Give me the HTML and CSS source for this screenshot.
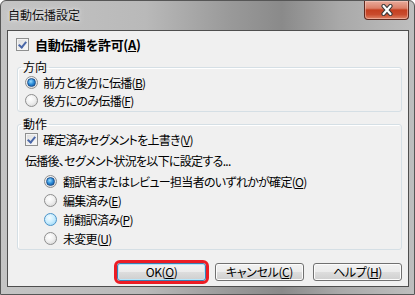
FILE: index.html
```html
<!DOCTYPE html>
<html>
<head>
	<title>自動伝播設定</title>
	<link rel="stylesheet" href="styles.css">
</head>
<body>
	<div class="window">
		<div class="titlebar">
			<span class="title">自動伝播設定</span>
			<span class="close">
				<svg width="14" height="12" viewBox="0 0 14 12">
					<path d="M3.5 2 L10.5 10 M10.5 2 L3.5 10" stroke="#3a3a3a" stroke-width="4.2" stroke-linecap="round"/>
					<path d="M3.5 2 L10.5 10 M10.5 2 L3.5 10" stroke="#fff" stroke-width="2.2" stroke-linecap="round"/>
				</svg>
			</span>
		</div>
		<div class="client">
			<label class="row main">
				<span class="box checked"></span>
				<b>自動伝播を許可(<u>A</u>)</b>
			</label>

			<fieldset class="group dir">
				<legend>方向</legend>
				<label class="row"><span class="dot on"></span><span>前方と後方に伝播(<u>B</u>)</span></label>
				<label class="row"><span class="dot"></span><span>後方にのみ伝播(<u>F</u>)</span></label>
			</fieldset>

			<fieldset class="group act">
				<legend>動作</legend>
				<label class="row gap"><span class="box checked"></span><span>確定済みセグメントを上書き(<u>V</u>)</span></label>
				<div class="row gap">伝播後、セグメント状況を以下に設定する...</div>
				<label class="row sub"><span class="dot on"></span><span>翻訳者またはレビュー担当者のいずれかが確定(<u>O</u>)</span></label>
				<label class="row sub"><span class="dot"></span><span>編集済み(<u>E</u>)</span></label>
				<label class="row sub"><span class="dot hover"></span><span>前翻訳済み(<u>P</u>)</span></label>
				<label class="row sub"><span class="dot"></span><span>未変更(<u>U</u>)</span></label>
			</fieldset>

			<div class="buttons">
				<button class="btn default marked">OK(<u>O</u>)</button>
				<button class="btn">キャンセル(<u>C</u>)</button>
				<button class="btn">ヘルプ(<u>H</u>)</button>
			</div>
		</div>
	</div>
</body>
</html>
```

FILE: styles.css
```css
* {
	box-sizing: border-box;
}
body {
	margin: 0;
	font-family: "Noto Sans CJK JP", "Noto Sans", sans-serif;
	font-size: 12px;
	color: #000;
	font-feature-settings: "palt";
}
.window {
	width: 415px;
	height: 295px;
	display: flex;
	flex-direction: column;
	padding: 0 5px 7px 6px;
	border: 1px solid #565656;
	border-radius: 6px 6px 0 0;
	background: linear-gradient(90deg, #c4c4c4 0%, #b9b9b9 35%, #9a9a9a 55%, #8a8a8a 68%, #a9a9a9 82%, #bebebe 100%);
}
.titlebar {
	height: 29px;
	display: flex;
	justify-content: space-between;
	align-items: flex-start;
}
.title {
	margin: 5px 0 0 1px;
	line-height: 18px;
	color: #111;
	text-shadow: 0 0 6px #e6e6e6, 0 0 3px #ececec;
}
.close {
	width: 45px;
	height: 19px;
	display: flex;
	align-items: center;
	justify-content: center;
	border: 1px solid #5e2a20;
	border-top: none;
	border-radius: 0 0 4px 4px;
	background: linear-gradient(#e8ab9b 0%, #dc8069 40%, #c43f20 50%, #c94b2d 75%, #df8467 100%);
	box-shadow: inset 0 0 0 1px rgba(255, 220, 210, 0.45);
}
.client {
	flex: 1;
	display: flex;
	flex-direction: column;
	padding: 4px 6px 5px 8px;
	border: 1px solid #4e4e4e;
	background: #f0f0f0;
}
.row {
	display: flex;
	align-items: center;
	height: 18px;
	white-space: nowrap;
}
.main {
	gap: 6px;
}
.main b {
	font-size: 13px;
	letter-spacing: -0.3px;
}
.group {
	margin: 0 0 0 1px;
	padding: 0 0 0 7px;
	border: 1px solid #d5dfe5;
	border-radius: 3px;
	box-shadow: inset 1px 1px 0 #fff;
	min-width: 0;
}
.group .row {
	letter-spacing: -0.7px;
}
.group legend {
	padding: 0 2px;
	margin-left: -4px;
	line-height: 12px;
}
.dir {
	margin-top: 8px;
	padding-top: 0;
	padding-bottom: 2px;
}
.act {
	margin-top: 6px;
	padding-bottom: 1px;
}
.dir .row {
	gap: 5px;
}
.act .row {
	height: 19px;
	gap: 5px;
}
.act .gap {
	margin-bottom: 2px;
}
.act .sub {
	padding-left: 19px;
	gap: 6px;
}
u {
	text-underline-offset: 1px;
}

/* checkbox */
.box {
	width: 13px;
	height: 13px;
	flex: none;
	border: 1px solid #8e8f8f;
	background: linear-gradient(135deg, #dcdcdc, #fbfbfb);
	box-shadow: inset 0 0 0 1px #f4f4f4;
	position: relative;
}
.box.checked::after {
	content: "";
	position: absolute;
	left: 2px;
	top: 1px;
	width: 3px;
	height: 6px;
	border: solid #4a67a8;
	border-width: 0 2px 2px 0;
	transform: translate(1px, 0) rotate(40deg);
}

/* radio */
.dot {
	width: 13px;
	height: 13px;
	flex: none;
	border-radius: 50%;
	border: 1px solid #8e8e8e;
	background: radial-gradient(circle at 40% 35%, #ffffff 0%, #f0f0f0 45%, #cfcfcf 100%);
	display: flex;
	align-items: center;
	justify-content: center;
}
.dot.on::after {
	content: "";
	width: 7px;
	height: 7px;
	border-radius: 50%;
	border: 1px solid #1b4f8c;
	background: radial-gradient(circle at 40% 35%, #9adcff 0%, #2a8ad6 50%, #0d4a96 100%);
}
.dot.hover {
	border-color: #4b94c9;
	background: radial-gradient(circle at 40% 35%, #f3fbff 0%, #cdeefe 45%, #8ed0f4 100%);
}

/* buttons */
.buttons {
	margin-top: auto;
	display: flex;
	justify-content: flex-end;
	gap: 9px;
}
.btn {
	width: 89px;
	height: 18px;
	padding: 0;
	font: inherit;
	font-feature-settings: "palt";
	letter-spacing: -0.4px;
	line-height: 16px;
	color: #000;
	border: 1px solid #707070;
	border-radius: 3px;
	background: linear-gradient(#f2f2f2 0%, #ebebeb 50%, #dddddd 51%, #cfcfcf 100%);
	box-shadow: inset 0 0 0 1px #fcfcfc;
}
.btn.default {
	border-color: #3c7fb1;
	box-shadow: inset 0 0 0 1px #b6e6fb;
}
.marked {
	outline: 3px solid #ec1c24;
}
```
